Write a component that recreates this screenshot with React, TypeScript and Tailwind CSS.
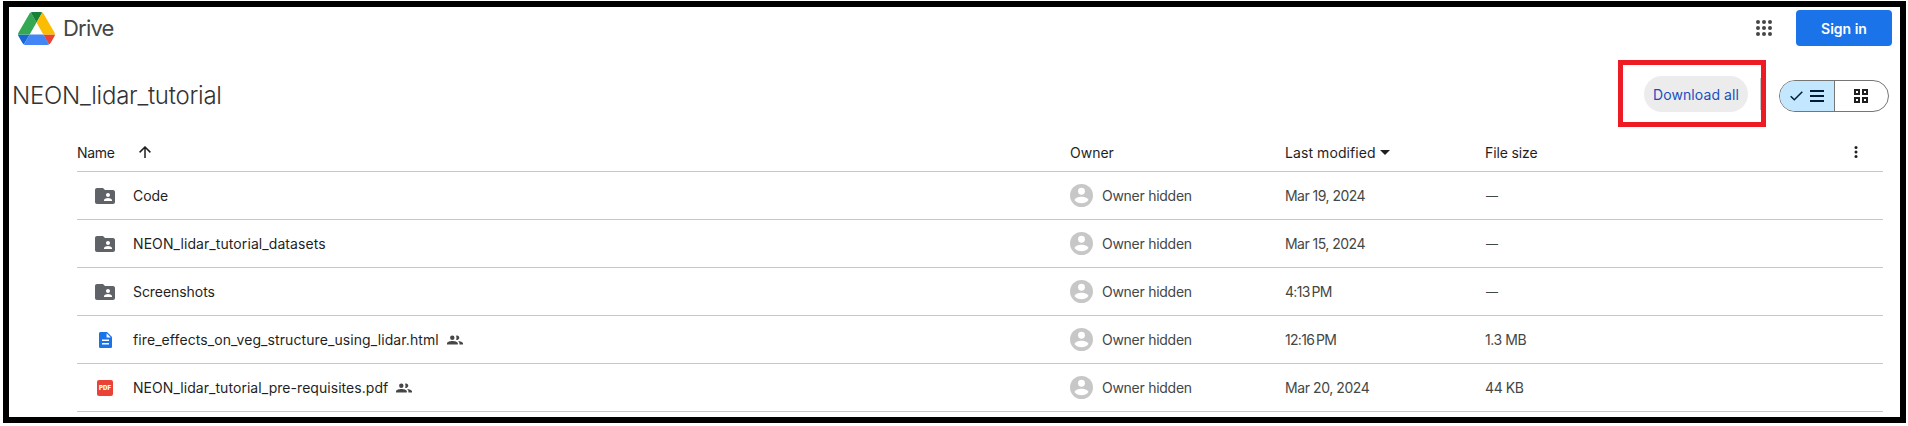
type Kind = "folder" | "doc" | "pdf";

interface FileRow {
  name: string;
  kind: Kind;
  shared: boolean;
  modified: string;
  size: string;
  nameClass: string;
  dateClass: string;
}

const files: FileRow[] = [
  { name: "Code", kind: "folder", shared: false, modified: "Mar 19, 2024", size: "—", nameClass: "tracking-[-0.1px]", dateClass: "tracking-[-0.53px]" },
  { name: "NEON_lidar_tutorial_datasets", kind: "folder", shared: false, modified: "Mar 15, 2024", size: "—", nameClass: "tracking-[0.08px]", dateClass: "tracking-[-0.53px]" },
  { name: "Screenshots", kind: "folder", shared: false, modified: "4:13\u2009PM", size: "—", nameClass: "tracking-[-0.06px]", dateClass: "tracking-[-0.7px]" },
  { name: "fire_effects_on_veg_structure_using_lidar.html", kind: "doc", shared: true, modified: "12:16\u2009PM", size: "1.3 MB", nameClass: "tracking-[0.09px]", dateClass: "tracking-[-0.7px]" },
  { name: "NEON_lidar_tutorial_pre-requisites.pdf", kind: "pdf", shared: true, modified: "Mar 20, 2024", size: "44 KB", nameClass: "tracking-[0.05px]", dateClass: "tracking-[-0.42px]" },
];

function DriveLogo() {
  return (
    <svg viewBox="0 0 87.3 78" className="h-[33px] w-[37px]">
      <path fill="#1967d2" d="m6.6 66.85 3.85 6.65c.8 1.4 1.95 2.5 3.3 3.3l13.75-23.8h-27.5c0 1.55.4 3.1 1.2 4.5z" />
      <path fill="#34a853" d="m43.65 25-13.75-23.8c-1.35.8-2.5 1.9-3.3 3.3l-25.4 44a9.06 9.06 0 0 0 -1.2 4.5h27.5z" />
      <path fill="#ea4335" d="m73.55 76.8c1.35-.8 2.5-1.9 3.3-3.3l1.6-2.75 7.65-13.25c.8-1.4 1.2-2.95 1.2-4.5h-27.502l5.852 11.5z" />
      <path fill="#188038" d="m43.65 25 13.75-23.8c-1.35-.8-2.9-1.2-4.5-1.2h-18.5c-1.6 0-3.15.45-4.5 1.2z" />
      <path fill="#4285f4" d="m59.8 53h-32.3l-13.75 23.8c1.35.8 2.9 1.2 4.5 1.2h50.8c1.6 0 3.15-.45 4.5-1.2z" />
      <path fill="#fbbc04" d="m73.4 26.5-12.7-22c-.8-1.4-1.95-2.5-3.3-3.3l-13.75 23.8 16.15 28h27.45c0-1.55-.4-3.1-1.2-4.5z" />
    </svg>
  );
}

function AppsIcon() {
  return (
    <svg viewBox="4 4 16 16" className="size-4" fill="#444746">
      {[6, 12, 18].map((y) => [6, 12, 18].map((x) => <circle key={`${x}-${y}`} cx={x} cy={y} r="2" />))}
    </svg>
  );
}

function FileIcon({ kind }: { kind: Kind }) {
  if (kind === "folder") {
    return (
      <svg viewBox="2 4 20 16" className="h-4 w-5" fill="#5f6368">
        <path d="M20 6h-8l-2-2H4c-1.1 0-1.99.9-1.99 2L2 18c0 1.1.9 2 2 2h16c1.1 0 2-.9 2-2V8c0-1.1-.9-2-2-2zm-5 3c1.1 0 2 .9 2 2s-.9 2-2 2-2-.9-2-2 .9-2 2-2zm4 8h-8v-1c0-1.33 2.67-2 4-2s4 .67 4 2v1z" />
      </svg>
    );
  }
  if (kind === "doc") {
    return (
      <svg viewBox="0 0 13 16" className="h-4 w-[13px]">
        <path fill="#1a73e8" d="M1.6 0H8l5 5v9.4c0 .9-.7 1.6-1.6 1.6H1.6C.7 16 0 15.300 0 14.400V1.600C0 .7.7 0 1.600 0z" />
        <path fill="#fff" d="M7.600 1.200V5.400H11.800zM3 7.600h7v1.500H3zM3 11h7v1.500H3z" />
      </svg>
    );
  }
  return (
    <span className="flex size-4 items-center justify-center rounded-[2px] bg-[#ea4335] text-[6px] leading-none font-black tracking-[0.1px] text-white">
      PDF
    </span>
  );
}

function PeopleIcon() {
  return (
    <svg viewBox="0 0 16 10" className="h-[10px] w-4" fill="#444746">
      <circle cx="5.300" cy="2.700" r="2.200" />
      <path d="M0 9.600V8.300C0 6.700 3.400 5.900 5.400 5.900s5.400.8 5.400 2.400v1.300z" />
      <path d="M8.900.8a2.200 2.200 0 1 1 0 3.800 3.500 3.500 0 0 0 0-3.800zM11 6c2.200.2 5 .9 5 2.300v1.300h-3.600V8.300c0-1-.6-1.700-1.400-2.300z" />
    </svg>
  );
}

function Avatar() {
  return (
    <svg viewBox="1 1 22 22" className="size-[23px]" fill="#c7c7c7">
      <circle cx="12" cy="12" r="11" />
      <circle cx="12" cy="8" r="3.300" fill="#fff" />
      <path fill="#fff" d="M12 13.200c3 0 6.200 1.300 6.700 3-1.500 2-4 3.200-6.700 3.200s-5.200-1.200-6.700-3.200c.5-1.700 3.700-3 6.700-3z" />
    </svg>
  );
}

function Header() {
  return (
    <header className="flex h-[47px] items-start justify-between pt-[3px] pr-2 pl-[9px]">
      <div className="flex items-center gap-2 pt-px">
        <DriveLogo />
        <span className="pt-px text-[22px] leading-[33px] tracking-[-0.8px] text-[#444746]">Drive</span>
      </div>
      <div className="flex items-center gap-6">
        <AppsIcon />
        <button className="h-9 w-24 rounded bg-[#1a73e8] pt-px text-sm font-semibold text-white">Sign in</button>
      </div>
    </header>
  );
}

function Toolbar() {
  return (
    <div className="flex h-[73px] items-start justify-between pr-[11px] pl-[3px]">
      <h1 className="pt-6 text-2xl leading-[36px] font-light tracking-[-0.25px] text-[#333]">NEON_lidar_tutorial</h1>
      <div className="flex items-start pt-[6px]">
        <div className="mr-[13px] flex h-[67px] w-[148px] items-start justify-between border-[5px] border-[#ed1c24] pt-[11px] pl-[21px]">
          <button className="h-9 w-[104px] rounded-full bg-[#ececec] pt-[2px] text-sm tracking-[0.08px] text-[#1a4fc0]">Download all</button>
          <span className="mt-[2px] h-8 w-px bg-[#c7c7c7]" />
        </div>
        <div className="mt-5 flex h-8 w-[110px] overflow-hidden rounded-full border border-[#747775]">
          <div className="flex w-[55px] items-center gap-[7px] border-r border-[#747775] bg-[#c2e7ff] pl-2.5">
            <svg viewBox="0 0 13 10" className="h-[10px] w-[13px]" fill="none" stroke="#001d35" strokeWidth="1.500">
              <path d="M.7 5.200 4.300 8.800 12.300.8" />
            </svg>
            <svg viewBox="0 0 14 12" className="h-3 w-[14px]" fill="#001d35">
              <path d="M0 0h14v2H0zM0 5h14v2H0zM0 10h14v2H0z" />
            </svg>
          </div>
          <div className="flex flex-1 items-center pl-[19px]">
            <svg viewBox="0 0 14 14" className="size-[14px]" fill="none" stroke="#1f1f1f" strokeWidth="2">
              <path d="M1 1h4v4H1zM9 1h4v4H9zM1 9h4v4H1zM9 9h4v4H9z" />
            </svg>
          </div>
        </div>
      </div>
    </div>
  );
}

const columns = "grid grid-cols-[993px_215px_200px_1fr] items-center border-b border-[#c7c7c7]";

function FileTable() {
  return (
    <section className="mr-[17px] ml-[68px] text-sm text-[#1f1f1f]">
      <div className={`${columns} h-[45px] pt-[7px]`}>
        <div className="flex items-center gap-6">
          <span className="tracking-[-0.3px]">Name</span>
          <svg viewBox="0 0 12 12" className="mb-[2px] size-3" fill="none" stroke="#1f1f1f" strokeWidth="1.500">
            <path d="M6 12V1.200M.6 6.400 6 1l5.400 5.400" />
          </svg>
        </div>
        <span>Owner</span>
        <div className="flex items-center gap-1">
          <span className="tracking-[0.08px]">Last modified</span>
          <svg viewBox="0 0 10 5" className="h-[5px] w-[10px]" fill="#1f1f1f">
            <path d="M0 0h10L5 5z" />
          </svg>
        </div>
        <div className="flex items-center justify-between pr-[25px]">
          <span className="tracking-[-0.13px]">File size</span>
          <svg viewBox="0 0 4 14" className="mb-[2px] h-[14px] w-1" fill="#1f1f1f">
            <circle cx="2" cy="2.500" r="1.500" />
            <circle cx="2" cy="7" r="1.500" />
            <circle cx="2" cy="11.500" r="1.500" />
          </svg>
        </div>
      </div>
      {files.map((file) => (
        <div key={file.name} className={`${columns} h-12`}>
          <div className="flex items-center">
            <span className="flex w-[56px] justify-center">
              <FileIcon kind={file.kind} />
            </span>
            <span className={file.nameClass}>{file.name}</span>
            {file.shared && (
              <span className="ml-2">
                <PeopleIcon />
              </span>
            )}
          </div>
          <div className="flex items-center gap-[9px] text-[#444746]">
            <Avatar />
            <span className="tracking-[-0.27px]">Owner hidden</span>
          </div>
          <span className={`text-[#444746] ${file.dateClass}`}>{file.modified}</span>
          {file.size === "—" ? (
            <span className="pl-px text-xs text-[#444746]">—</span>
          ) : (
            <span className="tracking-[-0.4px] text-[#444746]">{file.size}</span>
          )}
        </div>
      ))}
    </section>
  );
}

export default function App() {
  return (
    <main className="h-[426px] w-[1908px] overflow-hidden bg-white pt-px pl-[3px] font-['Inter','Liberation_Sans',sans-serif]">
      <div className="h-[422px] w-[1903px] overflow-hidden border-[6px] border-black">
        <Header />
        <Toolbar />
        <FileTable />
      </div>
    </main>
  );
}
